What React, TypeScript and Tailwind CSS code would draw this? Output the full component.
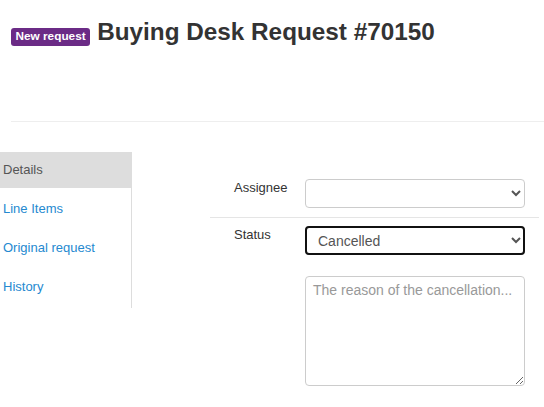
import React from "react";

const navItems = [
  { title: "Details", active: true },
  { title: "Line Items" },
  { title: "Original request" },
  { title: "History" },
];

export default function App() {
  return (
    <div className="min-h-screen bg-white font-['Liberation_Sans',Arial,sans-serif] text-[#333]">
      <div className="ml-[11px] h-[122px] border-b border-[#eee] pt-[19px]">
        <h1 className="flex items-baseline gap-[7px] text-[24.3px] font-bold leading-[1.1] text-[#333]">
          <span className="rounded-[3px] bg-[#6b2b86] px-[4.5px] pt-[3px] pb-[3px] text-[11.8px] font-bold leading-none text-white">
            New request
          </span>
          Buying Desk Request #70150
        </h1>
      </div>

      <div className="mt-[30px] flex items-start">
        <nav className="w-[132px] border-r border-[#ddd] pb-[3px] text-[13px]">
          {navItems.map((item) =>
            item.active ? (
              <div
                key={item.title}
                className="-mr-px flex h-[36px] items-center bg-[#ddd] pl-[3px] text-[#555]"
              >
                {item.title}
              </div>
            ) : (
              <a
                key={item.title}
                href="#"
                className="flex h-[39px] items-center pl-[3px] pt-[2px] text-[#2589d0]"
              >
                {item.title}
              </a>
            )
          )}
        </nav>

        <form className="ml-[78px] w-[329px] text-[13px]">
          <div className="mt-[18px] flex border-b border-[#e5e5e5] py-[9px]">
            <label className="w-[95px] pl-[24px] leading-[18px]">Assignee</label>
            <select className="h-[29px] w-[220px] rounded-[4px] border border-[#ccc] bg-white px-[8px] text-[14px] text-[#555]">
              <option></option>
            </select>
          </div>
          <div className="flex pt-[8px] pb-[9px]">
            <label className="w-[95px] pl-[24px] leading-[18px]">Status</label>
            <div className="flex w-[220px] flex-col gap-[21px]">
              <select
                defaultValue="cancelled"
                className="h-[29px] w-[220px] rounded-[4px] border border-[#ccc] bg-white px-[8px] text-[14px] text-[#555] outline-2 outline-[#111] -outline-offset-2"
              >
                <option value="new">New</option>
                <option value="cancelled">Cancelled</option>
              </select>
              <textarea
                placeholder="The reason of the cancellation..."
                className="h-[110px] w-[220px] rounded-[4px] border border-[#ccc] px-[7px] pt-[3px] text-[14px] leading-[20px] text-[#555] placeholder:text-[#999]"
              />
            </div>
          </div>
        </form>
      </div>
    </div>
  );
}
